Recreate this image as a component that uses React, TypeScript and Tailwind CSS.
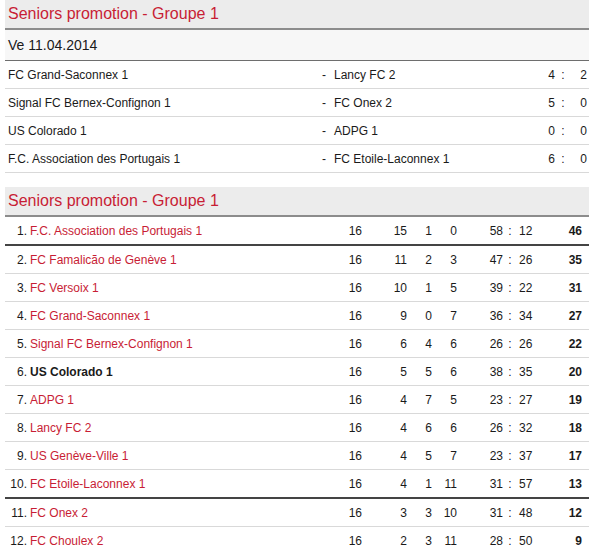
const matches = [
  { home: 'FC Grand-Saconnex 1', away: 'Lancy FC 2', h: 4, a: 2 },
  { home: 'Signal FC Bernex-Confignon 1', away: 'FC Onex 2', h: 5, a: 0 },
  { home: 'US Colorado 1', away: 'ADPG 1', h: 0, a: 0 },
  { home: 'F.C. Association des Portugais 1', away: 'FC Etoile-Laconnex 1', h: 6, a: 0 },
];

const table = [
  ['F.C. Association des Portugais 1', 16, 15, 1, 0, 58, 12, 46],
  ['FC Famalicão de Genève 1', 16, 11, 2, 3, 47, 26, 35],
  ['FC Versoix 1', 16, 10, 1, 5, 39, 22, 31],
  ['FC Grand-Saconnex 1', 16, 9, 0, 7, 36, 34, 27],
  ['Signal FC Bernex-Confignon 1', 16, 6, 4, 6, 26, 26, 22],
  ['US Colorado 1', 16, 5, 5, 6, 38, 35, 20],
  ['ADPG 1', 16, 4, 7, 5, 23, 27, 19],
  ['Lancy FC 2', 16, 4, 6, 6, 26, 32, 18],
  ['US Genève-Ville 1', 16, 4, 5, 7, 23, 37, 17],
  ['FC Etoile-Laconnex 1', 16, 4, 1, 11, 31, 57, 13],
  ['FC Onex 2', 16, 3, 3, 10, 31, 48, 12],
  ['FC Choulex 2', 16, 2, 3, 11, 28, 50, 9],
] as const;

// club of the page, shown in bold
const OWN = 'US Colorado 1';

function GroupHeader() {
  return (
    <div className="h-[30px] bg-[#ececec] border-b-2 border-[#8c8c8c] pl-[3px] flex items-center text-[16px] text-[#c81d35]">
      Seniors promotion - Groupe 1
    </div>
  );
}

export default function App() {
  return (
    <div className="ml-[5px] w-[584px] font-['Liberation_Sans',Arial,sans-serif] text-[12px] text-[#1a1a1a] bg-white">
      <GroupHeader />

      <div className="h-[31px] bg-[#f7f7f7] border-b border-[#6e6e6e] pl-[3px] flex items-center text-[14px]">
        Ve 11.04.2014
      </div>

      {matches.map((m) => (
        <div key={m.home} className="h-[28px] border-b border-[#d9d9d9] pl-[3px] pr-[2px] flex items-center">
          <div className="w-[314px]">{m.home}</div>
          <div className="w-[12px]">-</div>
          <div className="flex-1">{m.away}</div>
          <div className="w-[24px] text-right">{m.h}</div>
          <div className="w-[16px] text-center">:</div>
          <div className="w-[16px] text-right">{m.a}</div>
        </div>
      ))}

      <div className="mt-[14px]">
        <GroupHeader />
      </div>

      {table.map(([name, p, w, d, l, gf, ga, pts], i) => {
        const thick = i === 0 || i === 9;
        const own = name === OWN;
        return (
          <div
            key={name}
            className={`flex items-center pr-[7px] ${
              thick ? 'h-[29px] border-b-2 border-[#444]' : 'h-[28px] border-b border-[#d9d9d9]'
            } ${i === 11 ? 'border-b-0' : ''}`}
          >
            <div className="w-[22px] text-right">{i + 1}.</div>
            <div className={`w-[305px] pl-[3px] ${own ? 'font-bold text-[#1a1a1a]' : 'text-[#c81d35]'}`}>{name}</div>
            <div className="w-[30px] text-right">{p}</div>
            <div className="w-[45px] text-right">{w}</div>
            <div className="w-[25px] text-right">{d}</div>
            <div className="w-[25px] text-right">{l}</div>
            <div className="w-[46px] text-right">{gf}</div>
            <div className="w-[14px] text-center">:</div>
            <div className="w-[30px] pl-[2px]">{ga}</div>
            <div className="w-[35px] text-right font-bold">{pts}</div>
          </div>
        );
      })}
    </div>
  );
}
